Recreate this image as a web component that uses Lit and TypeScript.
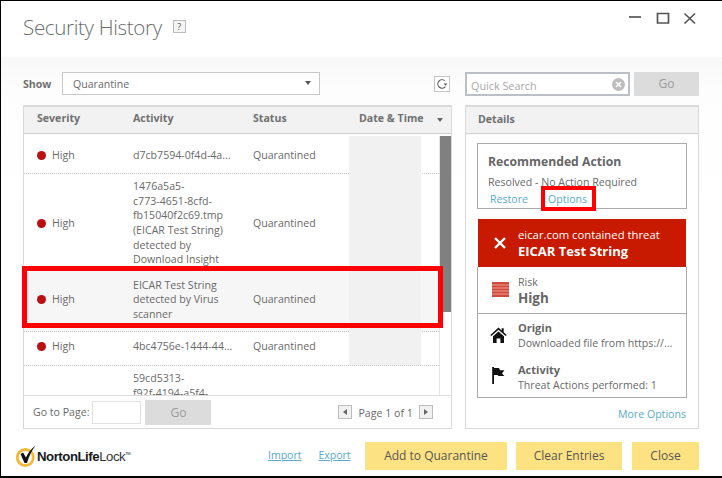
import { LitElement, html, css } from "lit";
import { customElement } from "lit/decorators.js";

const rows = [
  { h: 38, pad: "2px 0 0", lines: ["d7cb7594-0f4d-4a..."], status: "Quarantined", cls: "" },
  { h: 94, pad: "5px 0 0", lines: ["1476a5a5-", "c773-4651-8cfd-", "fb15040f2c69.tmp", "(EICAR Test String)", "detected by", "Download Insight"], status: "Quarantined", cls: "" },
  { h: 64, pad: "0", lines: ["EICAR Test String", "detected by Virus", "scanner"], status: "Quarantined", cls: "sel" },
  { h: 34, pad: "0 0 4px", lines: ["4bc4756e-1444-44..."], status: "Quarantined", cls: "last" },
];

@customElement("app-root")
export class AppRoot extends LitElement {
  static styles = css`
    :host {
      display: block;
      width: 722px;
      height: 478px;
      font-family: "Open Sans", "Noto Sans", sans-serif;
      font-size: 10.6px;
      color: #6a6a6a;
    }
    * { box-sizing: border-box; }
    .win {
      width: 722px; height: 478px;
      border-top: 1px solid #000; border-left: 1px solid #000; border-bottom: 2px solid #000;
      background: linear-gradient(#fff 0, #fff 55px, #f8f8f8 56px, #fdfdfd 90px, #fff 200px);
      display: flex; flex-direction: column;
      padding: 0 22px 0 22px;
    }
    .head { height: 71px; display: flex; align-items: flex-start; position: relative; flex: none; }
    .title { font-size: 20.6px; font-weight: 300; letter-spacing: -0.35px; color: #6c6c6c; line-height: 28px; margin-top: 12px; white-space: nowrap; }
    .help {
      width: 13px; height: 13px; margin: 19px 0 0 11px; border: 1px solid #bbb; background: #f4f4f4;
      font-size: 9px; line-height: 11px; text-align: center; color: #555;
    }
    .ctrls { position: absolute; top: 0; right: -22px; width: 100px; height: 30px; }
    .ctrls svg { position: absolute; left: 0; top: 0; }

    .bar { display: flex; align-items: stretch; height: 24px; flex: none; }
    .show { width: 39px; font-weight: 700; line-height: 25px; color: #707070; }
    .select {
      width: 258px; height: 23px; border: 1px solid #c8c8c8; background: #fff; padding-left: 10px; line-height: 23px;
      position: relative;
    }
    .caret { position: absolute; width: 0; height: 0; border: 3.5px solid transparent; border-top: 4px solid #555; border-bottom: 0; }
    .select .caret { right: 8px; top: 8px; }
    .refresh {
      width: 16px; height: 16px; margin: 4px 0 0 114px; border: 1px solid #c4c4c4; background: #fff; display: flex; align-items: center; justify-content: center;
    }
    .search {
      width: 165px; height: 24px; margin-left: 15px; border: 2px solid #bcc0c6; background: #fff; color: #a8a8a8;
      padding-left: 4px; font-size: 10.8px; display: flex; justify-content: space-between; align-items: center;
    }
    .search span.q { padding-top: 3px; }
    .clear { width: 13px; height: 13px; border-radius: 50%; background: #bdbdbd; margin: 1px 3px 0 0; display: flex; }
    .go { background: #dcdcdc; color: #9c9c9c; text-align: center; font-size: 12.2px; }
    .bar .go { width: 65px; height: 24px; margin-left: 4px; line-height: 24px; }

    .panels { display: flex; margin-top: 9px; height: 324px; flex: none; }
    .panel { border: 1px solid #d9d9d9; border-top-width: 2px; background: #fff; position: relative; display: flex; flex-direction: column; }
    .left { width: 429px; }
    .right { width: 234px; margin-left: 13px; }
    .th {
      height: 27px; background: #f2f2f2; border-bottom: 1px solid #d0d0d0; flex: none; font-weight: 700; color: #707070; line-height: 23px;
    }
    .grid { display: grid; grid-template-columns: 96px 120px 96px 72px 1fr; padding-left: 13px; }
    .thdate { position: relative; white-space: nowrap; margin-left: 10px; }
    .th .caret { left: 78px; top: 11px; border-top-color: #666; }
    .right .th { padding-left: 12px; line-height: 24px; }

    .body { flex: 1; min-height: 0; display: flex; padding-top: 2px; overflow: hidden; }
    .list { flex: 1; min-width: 0; }
    .track { width: 12px; border-left: 1px solid #e6e6e6; }
    .thumb { height: 176px; background: #808080; }
    .row { border-bottom: 1px dotted #c4c4c4; line-height: 14.6px; }
    .row.sel { background: #f6f6f6; }
    .row > div { display: flex; align-items: center; }
    .row .act { display: block; align-self: center; }
    .row .date { background: #f1f1f1; margin-bottom: -1px; position: relative; }
    .row.last .date { margin-bottom: 0; }
    .row.clip { border-bottom: 0; height: 31px; padding-top: 5px; }
    .row.clip .act { align-self: start; }
    .dot { width: 9px; height: 9px; border-radius: 50%; background: #bb0f12; margin-right: 6px; flex: none; }
    .act div { white-space: nowrap; }

    .pager { height: 33px; border-top: 1px solid #dcdcdc; flex: none; display: flex; align-items: center; padding-left: 9px; }
    .pager .input { width: 49px; height: 23px; border: 1px solid #e0e0e0; margin-left: 3px; background: #fff; }
    .pager .go { width: 66px; height: 25px; margin-left: 4px; line-height: 25px; }
    .arrow {
      width: 14px; height: 14px; border: 1px solid #bdbdbd; background: #f1f1f1; display: flex; align-items: center; justify-content: center;
    }
    .arrow i { width: 0; height: 0; border: 3px solid transparent; }
    .prev { margin-left: 127px; }
    .prev i { border-right: 4px solid #666; border-left: 0; }
    .next i { border-left: 4px solid #666; border-right: 0; }
    .pnum { margin: 0 7px 0 6px; width: 54px; white-space: nowrap; padding-top: 1px; }
    .hl { position: absolute; left: -2px; top: 159px; width: 421px; height: 62px; border: 5px solid #f00; pointer-events: none; }

    .rb { padding: 9px 11px 0 11px; flex: 1; display: flex; flex-direction: column; }
    .rec { height: 66px; border: 1px solid #aaa; padding: 9px 10px 0 10px; flex: none; }
    .rec h3 { margin: 0; font-size: 12.2px; font-weight: 700; color: #666; line-height: 18px; white-space: nowrap; }
    .rec p { margin: 4px 0 0; line-height: 15px; }
    .links { display: flex; margin: 2px 0 0 2px; line-height: 15px; }
    a { color: #5aaacb; text-decoration: none; }
    .opt { margin-left: 20px; position: relative; }
    .optbox { position: absolute; left: -7px; top: -6px; width: 55px; height: 25px; border: 4px solid #f00; pointer-events: none; }
    .threat {
      height: 48px; margin: 10px 1px 0; background: #c81a00; color: #fff; display: flex; align-items: center; flex: none;
    }
    .threat svg { margin: 0 12px 0 16px; flex: none; }
    .threat .t1 { font-size: 11.3px; line-height: 16px; white-space: nowrap; }
    .threat .t2 { font-size: 13px; font-weight: 700; line-height: 16px; white-space: nowrap; }
    .box { border: 1px solid #aaa; border-top: 0; flex: none; display: flex; }
    .risk { height: 47px; }
    .risk svg { margin: 15px 0 0 14px; }
    .risk .txt { margin-left: 9px; padding-top: 8px; }
    .risk .l { line-height: 15px; }
    .risk .v { font-size: 13.4px; font-weight: 700; line-height: 17px; color: #666; }
    .detail { height: 84px; flex-direction: column; padding: 6px 0 0 0; }
    .item { display: flex; height: 42px; flex: none; }
    .item + .item { height: auto; }
    .item .ic { width: 40px; flex: none; display: flex; justify-content: center; padding-top: 7px; }
    .item + .item .ic { padding-top: 5px; }
    .item b { display: block; font-size: 11px; line-height: 15.5px; color: #666; }
    .item span { display: block; line-height: 15px; white-space: nowrap; }
    .more { text-align: right; margin-top: 9px; padding-right: 1px; line-height: 15px; }

    .foot { display: flex; align-items: flex-start; flex: 1; padding: 13px 1px 0 0; position: relative; }
    .logo { display: flex; align-items: center; margin: 0 0 0 -7px; height: 28px; width: 252px; flex: none; }
    .lt { font-family: "Liberation Sans", Arial, sans-serif; font-size: 13.2px; color: #1a1a1a; letter-spacing: -0.45px; margin-left: 1px; white-space: nowrap; }
    .lt b { font-weight: 700; }
    .lt span { color: #333; }
    .lt sup { font-size: 4px; vertical-align: 6px; }
    .foot a { text-decoration: underline; line-height: 26px; letter-spacing: -0.05px; }
    .exp { margin-left: 17px; }
    .btn { height: 28px; background: #fde283; color: #555; text-align: center; line-height: 28px; font-size: 12px; flex: none; }
    .b1 { width: 142px; margin-left: auto; }
    .b2 { width: 106px; margin-left: 9px; }
    .b3 { width: 67px; margin-left: 10px; }
  `;

  render() {
    return html`
      <div class="win">
        <div class="head">
          <div class="title">Security History</div>
          <div class="help">?</div>
          <div class="ctrls">
            <svg width="100" height="30" viewBox="622 1 100 30" fill="none" stroke="#555" stroke-width="1.7">
              <path d="M629 17h12" />
              <path d="M657.5 13.5h11v9.5h-11z" />
              <path d="M684.5 13.5l10.5 10M695 13.5l-10.5 10" />
            </svg>
          </div>
        </div>
        <div class="bar">
          <div class="show">Show</div>
          <div class="select">Quarantine<i class="caret"></i></div>
          <div class="refresh">
            <svg width="12" height="12" viewBox="0 0 12 12" fill="none" stroke="#555" stroke-width="1.1">
              <path d="M9.3 8.6A4.2 4.2 0 1 1 8.6 2.6" />
              <path d="M7.6 5.6h3.6L9.4 7.8z" fill="#555" stroke="none" />
            </svg>
          </div>
          <div class="search">
            <span class="q">Quick Search</span>
            <span class="clear">
              <svg width="13" height="13" viewBox="0 0 13 13" stroke="#fff" stroke-width="1.6"><path d="M4 4l5 5M9 4l-5 5" /></svg>
            </span>
          </div>
          <div class="go">Go</div>
        </div>
        <div class="panels">
          <div class="panel left">
            <div class="th grid">
              <div>Severity</div><div>Activity</div><div>Status</div>
              <div class="thdate">Date &amp; Time<i class="caret"></i></div><div></div>
            </div>
            <div class="body">
              <div class="list">
                ${rows.map(
                  (r) => html`
                    <div class="row grid ${r.cls}" style="height:${r.h}px">
                      <div style="padding:${r.pad}"><i class="dot"></i>High</div>
                      <div class="act" style="padding:${r.pad}">${r.lines.map((l) => html`<div>${l}</div>`)}</div>
                      <div style="padding:${r.pad}">${r.status}</div>
                      <div class="date"></div>
                      <div></div>
                    </div>
                  `
                )}
                <div class="row grid clip">
                  <div></div>
                  <div class="act"><div>59cd5313-</div><div>f92f-4194-a5f4-</div></div>
                </div>
              </div>
              <div class="track"><div class="thumb"></div></div>
            </div>
            <div class="pager">
              <span>Go to Page:</span>
              <div class="input"></div>
              <div class="go">Go</div>
              <div class="arrow prev"><i></i></div>
              <div class="pnum">Page 1 of 1</div>
              <div class="arrow next"><i></i></div>
            </div>
            <div class="hl"></div>
          </div>
          <div class="panel right">
            <div class="th">Details</div>
            <div class="rb">
              <div class="rec">
                <h3>Recommended Action</h3>
                <p>Resolved - No Action Required</p>
                <div class="links">
                  <a>Restore</a>
                  <a class="opt">Options<span class="optbox"></span></a>
                </div>
              </div>
              <div class="threat">
                <svg width="12" height="12" viewBox="0 0 12 12" stroke="#fff" stroke-width="2.4"><path d="M1 1l10 10M11 1L1 11" /></svg>
                <div>
                  <div class="t1">eicar.com contained threat</div>
                  <div class="t2">EICAR Test String</div>
                </div>
              </div>
              <div class="box risk">
                <svg width="17" height="15" viewBox="0 0 17 15">
                  <rect width="17" height="15" fill="#d24a3c" />
                  <path d="M0 3h17M0 6h17M0 9h17M0 12h17" stroke="#f4b3aa" stroke-width="0.8" />
                </svg>
                <div class="txt"><div class="l">Risk</div><div class="v">High</div></div>
              </div>
              <div class="box detail">
                <div class="item">
                  <div class="ic">
                    <svg width="17" height="16" viewBox="0 0 17 16" fill="#111">
                      <path d="M8.5 0.5L0.3 8l1 1.1L8.5 2.8l7.2 6.3 1-1.1-3-2.8V1.2h-2v2.3z" />
                      <path d="M3 9.2L8.5 4.5 14 9.2V16h-3.6v-4.6H6.6V16H3z" />
                    </svg>
                  </div>
                  <div><b>Origin</b><span>Downloaded file from https://...</span></div>
                </div>
                <div class="item">
                  <div class="ic">
                    <svg width="14" height="17" viewBox="0 0 14 17" fill="#111">
                      <path d="M1.2 0h1.8v17H1.2z" />
                      <path d="M3 1h5l1 2.2h4.4L11 6.5l2.4 2.5H7.5L6.4 8H3z" />
                    </svg>
                  </div>
                  <div><b>Activity</b><span>Threat Actions performed: 1</span></div>
                </div>
              </div>
              <div class="more"><a>More Options</a></div>
            </div>
          </div>
        </div>
        <div class="foot">
          <div class="logo">
            <svg width="20" height="26" viewBox="0 0 20 26" fill="none">
              <circle cx="9.3" cy="14.5" r="8" stroke="#f0b93a" stroke-width="2.8" />
              <path d="M4.5 11L7 9.5l3 5C12 10 15 6 19.5 2.8 16 7 13 13 11 20H8.5z" fill="#111" />
            </svg>
            <span class="lt"><b>NortonLife</b><span>Lock</span><sup>TM</sup></span>
          </div>
          <a>Import</a>
          <a class="exp">Export</a>
          <div class="btn b1">Add to Quarantine</div>
          <div class="btn b2">Clear Entries</div>
          <div class="btn b3">Close</div>
        </div>
      </div>
    `;
  }
}
